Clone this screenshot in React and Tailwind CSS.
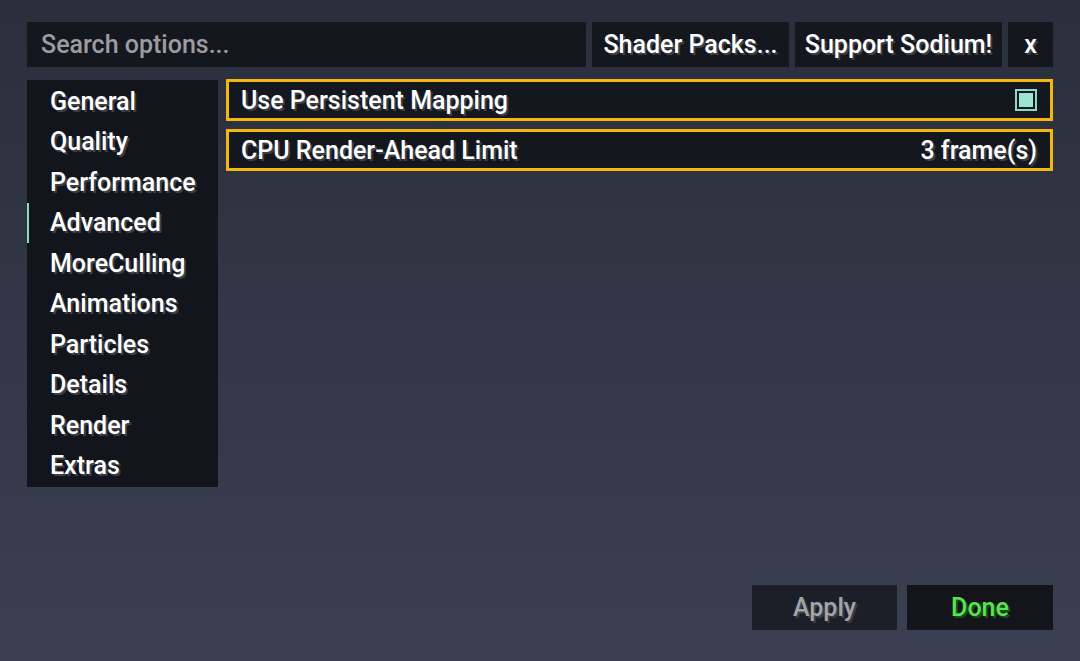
import React, { useState } from 'react';

const categories = [
  'General',
  'Quality',
  'Performance',
  'Advanced',
  'MoreCulling',
  'Animations',
  'Particles',
  'Details',
  'Render',
  'Extras',
];

const shadow = '[text-shadow:2px_2px_0_#3c3f46]';

export default function App() {
  const [selected, setSelected] = useState('Advanced');
  const [persistent, setPersistent] = useState(true);

  return (
    <div className="w-[1080px] h-[661px] overflow-hidden bg-gradient-to-b from-[#2a2f3d] to-[#3a4051] font-['Roboto',sans-serif] font-medium text-white text-[25px] leading-none flex flex-col px-[27px] pt-[22px] pb-[31px]">
      {/* top bar */}
      <div className="flex gap-[6px] h-[45px]">
        <div className="flex-1 bg-[#15171e] flex items-center pl-[14px] text-[#9b9da1]">
          Search options...
        </div>
        <button className={`w-[197px] bg-[#15171e] flex items-center justify-center ${shadow}`}>Shader Packs...</button>
        <button className={`w-[207px] bg-[#15171e] flex items-center justify-center ${shadow}`}>Support Sodium!</button>
        <button className={`w-[45px] bg-[#15171e] flex items-center justify-center ${shadow}`}>x</button>
      </div>

      <div className="flex gap-[8px] mt-[13px] flex-1">
        {/* sidebar */}
        <div className="w-[191px] self-start bg-[#12151c] flex flex-col py-[1px]">
          {categories.map((c) => (
            <div
              key={c}
              onClick={() => setSelected(c)}
              className={`h-[40.5px] flex items-center pl-[21px] border-l-2 cursor-pointer ${shadow} ${selected === c ? 'border-[#8fd8c8]' : 'border-transparent'}`}
            >
              {c}
            </div>
          ))}
        </div>

        {/* options */}
        <div className="flex-1 flex flex-col gap-[8px] -mt-[1px]">
          <div
            onClick={() => setPersistent(!persistent)}
            className="h-[42px] border-[3px] border-[#f5b60f] bg-[#15171e] flex items-center justify-between pl-[12px] pr-[13px] cursor-pointer"
          >
            <span className={shadow}>Use Persistent Mapping</span>
            <span className="w-[22px] h-[22px] border-2 border-[#8fd8c8] p-[2px] flex">
              {persistent && <span className="flex-1 bg-[#9fe3d3]" />}
            </span>
          </div>
          <div className="h-[42px] border-[3px] border-[#f5b60f] bg-[#15171e] flex items-center justify-between pl-[12px] pr-[13px]">
            <span className={shadow}>CPU Render-Ahead Limit</span>
            <span className={shadow}>3 frame(s)</span>
          </div>
          <div className="flex-1" />
          <div className="flex justify-end gap-[10px]">
            <button className="w-[145px] h-[45px] bg-[#1c1f28] flex items-center justify-center text-[#a3a4a8] [text-shadow:2px_2px_0_#3a3c42]">Apply</button>
            <button className="w-[146px] h-[45px] bg-[#13151b] flex items-center justify-center text-[#56e54e] [text-shadow:2px_2px_0_#1f4a1c]">Done</button>
          </div>
        </div>
      </div>
    </div>
  );
}
